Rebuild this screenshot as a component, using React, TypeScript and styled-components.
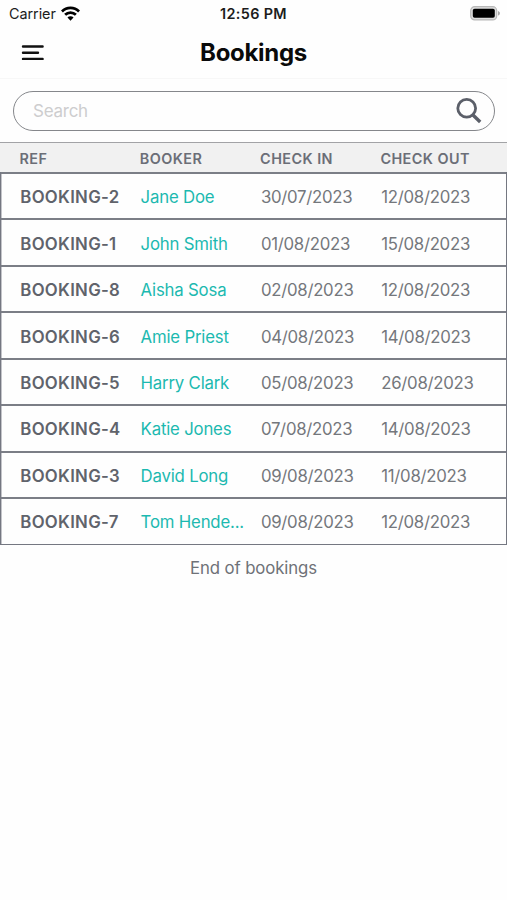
import React from 'react';
import styled, { createGlobalStyle } from 'styled-components';

const GlobalStyle = createGlobalStyle`
  * { box-sizing: border-box; }
  body { margin: 0; background: #fefefe; }
`;

const Screen = styled.div`
  display: flex;
  flex-direction: column;
  width: 100%;
  height: 900px;
  overflow: hidden;
  background: #fefefe;
  color: #6c6f76;
  font-family: Inter, 'Liberation Sans', sans-serif;
`;

const StatusBar = styled.div`
  display: grid;
  grid-template-columns: 1fr auto 1fr;
  align-items: center;
  height: 27px;
  padding: 0 9px;
  color: #1c1c1c;
  font-size: 14.4px;
`;

const Carrier = styled.div`
  display: flex;
  align-items: center;
  gap: 5px;
  letter-spacing: -0.05px;
`;

const Clock = styled.div`
  font-weight: 600;
  font-size: 14.4px;
  letter-spacing: 0.35px;
`;

const Battery = styled.svg`
  justify-self: end;
  margin-right: -3px;
`;

const NavBar = styled.header`
  display: grid;
  grid-template-columns: 1fr auto 1fr;
  align-items: center;
  height: 52px;
  padding: 0 21px;
  border-bottom: 1px solid #f7f7f7;
`;

const MenuButton = styled.button`
  display: flex;
  width: 24px;
  padding: 0;
  border: 0;
  background: none;
`;

const Title = styled.h1`
  margin: 0;
  color: #0a0a0a;
  font-size: 24px;
  font-weight: 700;
  line-height: 30px;
  letter-spacing: -0.3px;
`;

const SearchField = styled.label`
  display: flex;
  align-items: center;
  justify-content: space-between;
  height: 40px;
  margin: 12px 12px 11px 13px;
  padding: 0 11px 0 18px;
  border: 1.5px solid #85878b;
  border-radius: 20px;
`;

const SearchInput = styled.input`
  flex: 1;
  min-width: 0;
  padding: 0 0 0 1px;
  border: 0;
  outline: 0;
  background: none;
  font: 400 17px Inter, sans-serif;
  letter-spacing: -0.25px;
  &::placeholder { color: #cdcdce; opacity: 1; }
`;

const Columns = styled.div`
  display: grid;
  grid-template-columns: 120.3px 120.3px 120.3px 1fr;
  align-items: center;
`;

const TableHead = styled(Columns)`
  height: 30px;
  padding: 2px 0 0 19.5px;
  border-top: 1px solid #a2a3a6;
  background: #f1f1f1;
  color: #6b6e77;
  font-size: 14.4px;
  font-weight: 600;
  letter-spacing: 0.45px;
  line-height: 18px;
`;

const TableBody = styled.div`
  display: grid;
  grid-template-rows: repeat(8, 46.45px);
  border: solid #747781;
  border-width: 0 1px 1px;
`;

const Row = styled(Columns)`
  padding: 2px 0 0 19.3px;
  border-top: 2px solid #7b7e86;
  box-shadow: inset 1px 0 #c3c4c9;
  font-size: 16.8px;
`;

const Reference = styled.span`
  color: #60636b;
  font-weight: 600;
  letter-spacing: 0.3px;
`;

const Booker = styled.span`
  color: #1cb9b0;
  letter-spacing: -0.2px;
  white-space: nowrap;
`;

const StayDate = styled.span`
  color: #74777c;
  letter-spacing: -0.27px;
`;

const Footer = styled.p`
  margin: 12px 0 0;
  color: #6f7278;
  font-size: 16.8px;
  letter-spacing: -0.12px;
  line-height: 22px;
  text-align: center;
`;

const bookings = [
  ['BOOKING-2', 'Jane Doe', '30/07/2023', '12/08/2023'],
  ['BOOKING-1', 'John Smith', '01/08/2023', '15/08/2023'],
  ['BOOKING-8', 'Aisha Sosa', '02/08/2023', '12/08/2023'],
  ['BOOKING-6', 'Amie Priest', '04/08/2023', '14/08/2023'],
  ['BOOKING-5', 'Harry Clark', '05/08/2023', '26/08/2023'],
  ['BOOKING-4', 'Katie Jones', '07/08/2023', '14/08/2023'],
  ['BOOKING-3', 'David Long', '09/08/2023', '11/08/2023'],
  ['BOOKING-7', 'Tom Hende...', '09/08/2023', '12/08/2023'],
];

export default function App() {
  return (
    <Screen>
      <GlobalStyle />
      <StatusBar>
        <Carrier>
          Carrier
          <svg width="19" height="15" viewBox="0 0 18 14" fill="none" stroke="#000" strokeWidth="2.6">
            <path d="M0.9 5.1a11.5 11.5 0 0 1 16.2 0" />
            <path d="M3.9 8.2a7.2 7.2 0 0 1 10.2 0" />
            <path d="M9 13.8 6.1 10.9a4.1 4.1 0 0 1 5.8 0Z" fill="#000" stroke="none" />
          </svg>
        </Carrier>
        <Clock>12:56 PM</Clock>
        <Battery width="31" height="15" viewBox="0 0 31 15">
          <rect x="0.7" y="0.7" width="26" height="13.2" rx="4" fill="#dedede" stroke="#b8b8b8" strokeWidth="1.2" />
          <rect x="2.8" y="2.8" width="22" height="9" rx="1.8" fill="#000" />
          <path d="M28 5v4.6c2.6-.8 2.6-3.8 0-4.6Z" fill="#aaa" />
        </Battery>
      </StatusBar>
      <NavBar>
        <MenuButton aria-label="Menu">
          <svg width="24" height="18" viewBox="0 0 24 18" stroke="#111" strokeWidth="2.4" strokeLinecap="round">
            <path d="M2 2.5h19.6M2 8.7h15M2 14.9h19.6" />
          </svg>
        </MenuButton>
        <Title>Bookings</Title>
      </NavBar>
      <SearchField>
        <SearchInput placeholder="Search" />
        <svg width="28" height="28" viewBox="0 0 28 28" fill="none" stroke="#5b5f69" strokeWidth="2.8">
          <circle cx="11.7" cy="11.3" r="8.9" />
          <path d="m17.7 17.7 7.5 7.3" strokeWidth="3.4" />
        </svg>
      </SearchField>
      <TableHead>
        <span>REF</span>
        <span>BOOKER</span>
        <span>CHECK IN</span>
        <span>CHECK OUT</span>
      </TableHead>
      <TableBody>
        {bookings.map(([reference, booker, checkIn, checkOut]) => (
          <Row key={reference}>
            <Reference>{reference}</Reference>
            <Booker>{booker}</Booker>
            <StayDate>{checkIn}</StayDate>
            <StayDate>{checkOut}</StayDate>
          </Row>
        ))}
      </TableBody>
      <Footer>End of bookings</Footer>
    </Screen>
  );
}
